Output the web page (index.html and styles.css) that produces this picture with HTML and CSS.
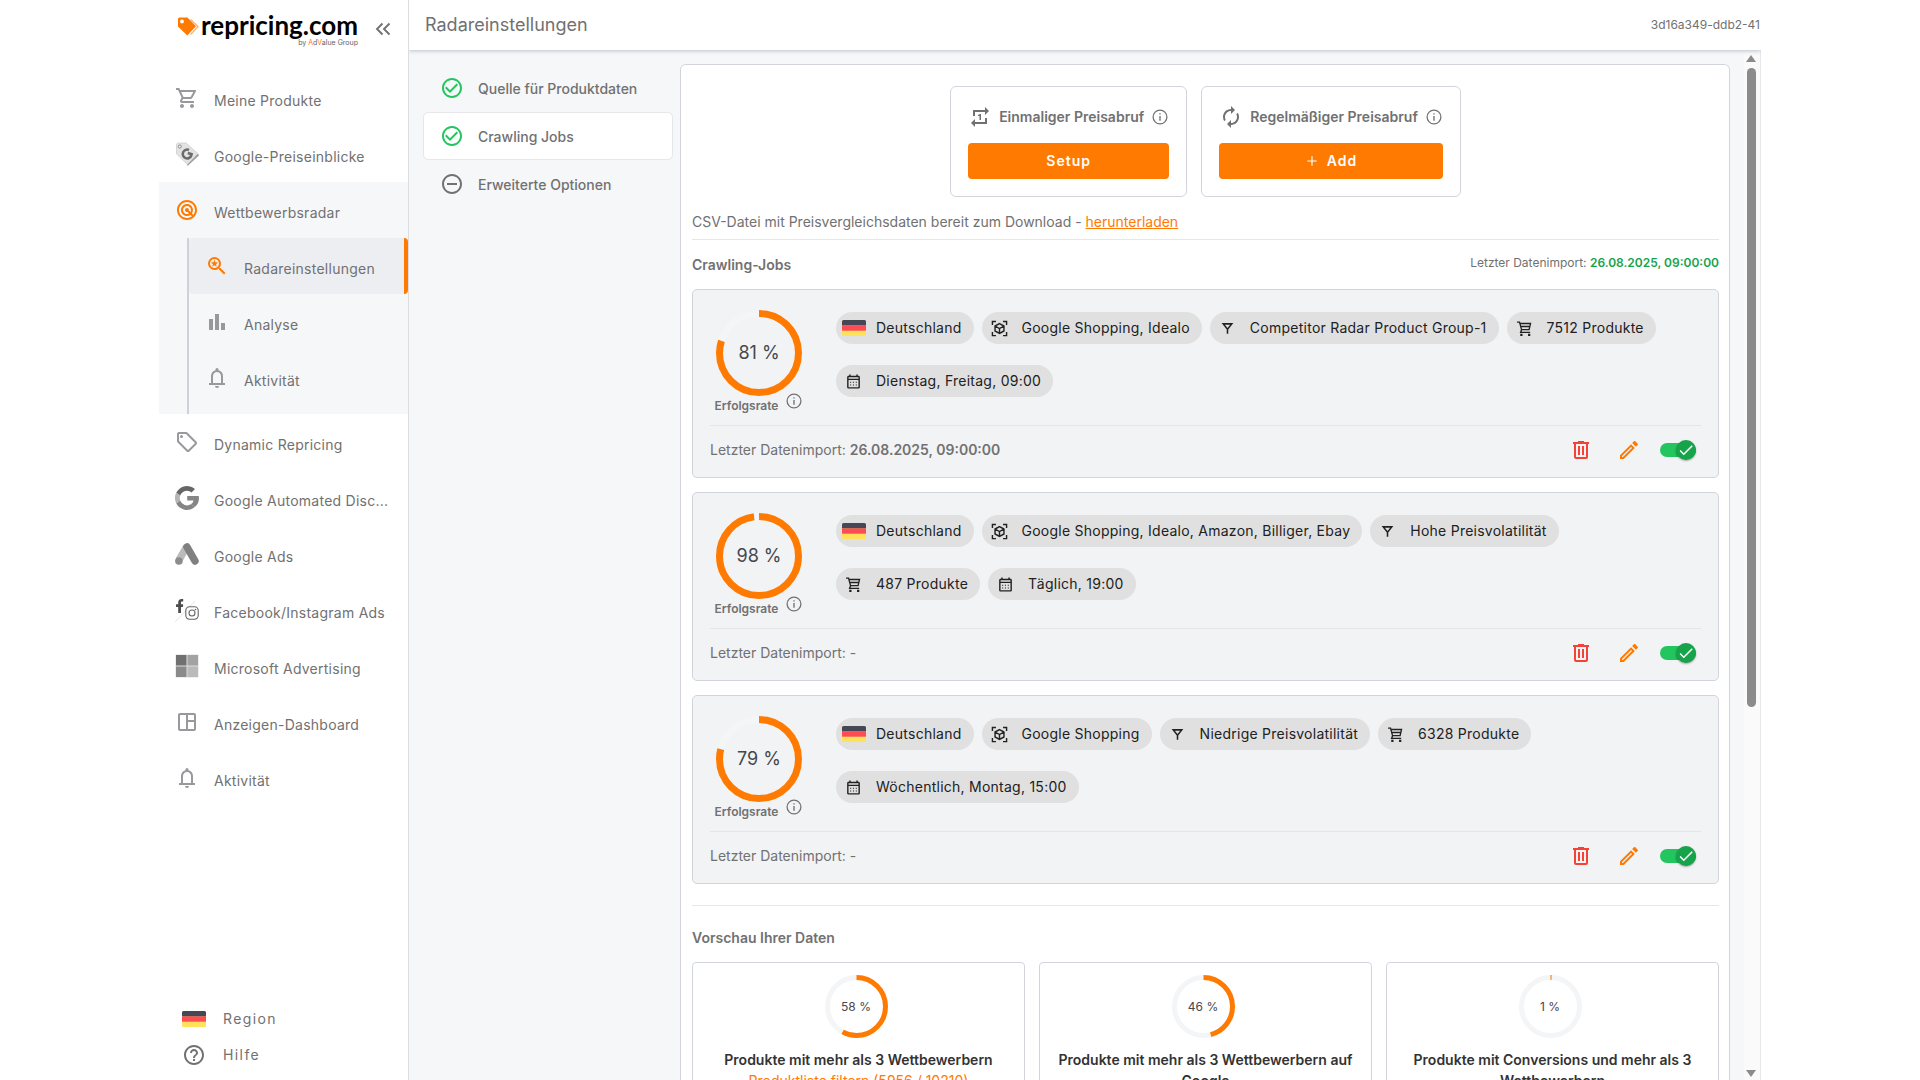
FILE: index.html
```html
<!DOCTYPE html>
<html lang="de">
<head>
<meta charset="utf-8">
<meta name="viewport" content="width=device-width, initial-scale=1">
<title>Radareinstellungen – repricing.com</title>
<link rel="stylesheet" href="styles.css">
</head>
<body>
<svg class="sprite" aria-hidden="true">
  <symbol id="cart" viewBox="0 0 24 24"><path d="M15.55 13c.75 0 1.41-.41 1.75-1.03l3.58-6.49A.996.996 0 0 0 20.01 4H5.21l-.94-2H1v2h2l3.6 7.59-1.35 2.44C4.52 15.37 5.48 17 7 17h12v-2H7l1.1-2h7.45zM6.16 6h12.15l-2.76 5H8.53L6.16 6zM7 18c-1.1 0-1.99.9-1.99 2S5.9 22 7 22s2-.9 2-2-.9-2-2-2zm10 0c-1.1 0-1.99.9-1.99 2s.89 2 1.99 2 2-.9 2-2-.9-2-2-2z"/></symbol>
  <symbol id="chip-cart" viewBox="0 0 24 24"><path fill="none" stroke="currentColor" stroke-width="1.9" d="M1.5 3H5l2.8 10.500h10.700L20.500 5H5.500M6.500 9.200h13M8 13.500 6.500 17.500H20"/><path d="M6 19.500h3.200v3.200H6zM17 19.500h3.200v3.200H17z"/></symbol>
  <symbol id="radar" viewBox="0 0 24 24"><path d="M19.740 18.330C21.150 16.600 22 14.400 22 12c0-5.520-4.480-10-10-10S2 6.480 2 12s4.480 10 10 10c2.400 0 4.600-.85 6.330-2.260.27-.22.530-.46.780-.71.030-.030.050-.060.070-.080.200-.200.390-.410.560-.620zM12 20c-4.410 0-8-3.590-8-8s3.590-8 8-8 8 3.590 8 8c0 1.850-.630 3.540-1.690 4.900l-1.430-1.430c.69-.98 1.100-2.170 1.100-3.460 0-3.310-2.690-6-6-6s-6 2.690-6 6 2.690 6 6 6c1.300 0 2.510-.420 3.490-1.130l1.420 1.420C15.540 19.370 13.850 20 12 20zm1.920-7.490c.17-.66.020-1.380-.490-1.900l-.020-.020c-.77-.77-2-.78-2.780-.040-.010.010-.030.020-.050.040-.78.780-.78 2.050 0 2.830l.020.020c.52.510 1.250.67 1.910.490l1.510 1.510c-.6.360-1.290.58-2.040.58-2.210 0-4-1.790-4-4s1.790-4 4-4 4 1.790 4 4c0 .73-.210 1.410-.560 2l-1.500-1.510z"/></symbol>
  <symbol id="saved-search" viewBox="0 0 24 24"><path d="M15.5 14h-.79l-.28-.27A6.500 6.500 0 0 0 16 9.500 6.500 6.500 0 1 0 9.500 16c1.610 0 3.090-.59 4.230-1.570l.270.280v.790l5 4.990L20.490 19l-4.990-5zm-6 0C7.010 14 5 11.990 5 9.500S7.010 5 9.500 5 14 7.010 14 9.500 11.990 14 9.500 14z"/><path d="m9.500 5.800.95 2.550 2.750.1-2.150 1.700.75 2.650-2.300-1.500-2.300 1.500.75-2.650-2.150-1.700 2.750-.1z"/></symbol>
  <symbol id="bars" viewBox="0 0 24 24"><path d="M4 9h4v11H4zm12 4h4v7h-4zm-6-9h4v16h-4z"/></symbol>
  <symbol id="bell" viewBox="0 0 24 24"><path d="M4 19v-2h2v-7q0-2.080 1.250-3.690T10.500 4.200v-.7a1.500 1.500 0 0 1 3 0v.7q2 .5 3.250 2.110T18 10v7h2v2zm8 3a2 2 0 0 1-2-2h4a2 2 0 0 1-2 2zm-4-5h8v-7q0-1.650-1.170-2.820T12 6 9.180 7.180 8 10z"/></symbol>
  <symbol id="tag" viewBox="0 0 24 24"><path d="m21.410 11.580-9-9C12.050 2.220 11.550 2 11 2H4c-1.100 0-2 .9-2 2v7c0 .55.220 1.050.59 1.420l9 9c.360.360.860.580 1.410.580s1.050-.220 1.410-.590l7-7c.370-.360.590-.860.590-1.410s-.230-1.060-.590-1.420zM13 20.010 4 11V4h7v-.010l9 9-7 7.020z"/><circle cx="6.500" cy="6.500" r="1.500"/></symbol>
  <symbol id="layout" viewBox="0 0 24 24"><path d="M19 3H5c-1.100 0-2 .9-2 2v14c0 1.100.9 2 2 2h14c1.100 0 2-.9 2-2V5c0-1.100-.9-2-2-2zM5 19V5h6v14H5zm14 0h-6v-7h6v7zm0-9h-6V5h6v5z"/></symbol>
  <symbol id="help" viewBox="0 0 24 24"><path d="M11 18h2v-2h-2v2zm1-16C6.480 2 2 6.480 2 12s4.480 10 10 10 10-4.480 10-10S17.520 2 12 2zm0 18c-4.410 0-8-3.590-8-8s3.590-8 8-8 8 3.590 8 8-3.590 8-8 8zm0-14c-2.210 0-4 1.790-4 4h2c0-1.100.9-2 2-2s2 .9 2 2c0 2-3 1.750-3 5h2c0-2.250 3-2.500 3-5 0-2.210-1.790-4-4-4z"/></symbol>
  <symbol id="check-circle" viewBox="0 0 24 24"><path d="M16.590 7.580 10 14.170l-3.590-3.580L5 12l5 5 8-8zM12 2C6.480 2 2 6.480 2 12s4.480 10 10 10 10-4.480 10-10S17.520 2 12 2zm0 18c-4.420 0-8-3.580-8-8s3.580-8 8-8 8 3.580 8 8-3.580 8-8 8z"/></symbol>
  <symbol id="minus-circle" viewBox="0 0 24 24"><path d="M7 11v2h10v-2H7zm5-9C6.480 2 2 6.480 2 12s4.480 10 10 10 10-4.480 10-10S17.520 2 12 2zm0 18c-4.410 0-8-3.590-8-8s3.590-8 8-8 8 3.590 8 8-3.590 8-8 8z"/></symbol>
  <symbol id="info" viewBox="0 0 24 24"><circle cx="12" cy="12" r="9.200" fill="none" stroke="currentColor" stroke-width="1.700"/><path d="M11.100 10.500h1.800V17h-1.800zM11.100 7h1.800v1.800h-1.800z"/></symbol>
  <symbol id="repeat-one" viewBox="0 0 24 24"><path d="M7 7h10v3l4-4-4-4v3H5v6h2V7zm10 10H7v-3l-4 4 4 4v-3h12v-6h-2v4zm-4-2V9h-1l-2 1v1h1.500v4H13z"/></symbol>
  <symbol id="autorenew" viewBox="0 0 24 24"><path d="M12 6v3l4-4-4-4v3c-4.420 0-8 3.580-8 8 0 1.570.460 3.030 1.240 4.260L6.700 14.800c-.450-.830-.7-1.790-.7-2.800 0-3.310 2.690-6 6-6zm6.760 1.740L17.300 9.200c.440.840.7 1.790.7 2.800 0 3.310-2.690 6-6 6v-3l-4 4 4 4v-3c4.420 0 8-3.580 8-8 0-1.570-.460-3.030-1.240-4.260z"/></symbol>
  <symbol id="cube" viewBox="0 0 24 24"><path fill="none" stroke="currentColor" stroke-width="2" d="M2 7V2h5M17 2h5v5M22 17v5h-5M7 22H2v-5M12 5l6.300 3.500v7L12 19l-6.300-3.500v-7zM5.700 8.500 12 12l6.300-3.500M12 12v7"/></symbol>
  <symbol id="filter" viewBox="0 0 24 24"><path fill="none" stroke="currentColor" stroke-width="2.200" d="M6 5.500h12L12 13zM12 12v7.500"/></symbol>
  <symbol id="calendar" viewBox="0 0 24 24"><path d="M19 4h-1V2h-2v2H8V2H6v2H5c-1.110 0-1.990.9-1.990 2L3 20a2 2 0 0 0 2 2h14c1.100 0 2-.9 2-2V6c0-1.100-.9-2-2-2zm0 16H5V10h14v10zm0-12H5V6h14v2zM8.700 13.700H7.200v-1.500h1.500zm4 0h-1.500v-1.500h1.500zm4 0h-1.500v-1.500h1.500zm-8 4H7.200v-1.500h1.500zm4 0h-1.500v-1.500h1.500zm4 0h-1.500v-1.500h1.500z"/></symbol>
  <symbol id="trash" viewBox="0 0 24 24"><path d="M9 3v1H4v2h1v13a2 2 0 0 0 2 2h10a2 2 0 0 0 2-2V6h1V4h-5V3H9zM7 6h10v13H7V6zm2 2v9h2V8H9zm4 0v9h2V8h-2z"/></symbol>
  <symbol id="pencil" viewBox="0 0 24 24"><path d="m14.060 9.020.920.920L5.920 19H5v-.920l9.060-9.060M17.660 3c-.25 0-.51.100-.700.290l-1.830 1.830 3.750 3.750 1.830-1.830a.996.996 0 0 0 0-1.410l-2.340-2.340c-.200-.200-.450-.290-.710-.290zm-3.600 3.190L3 17.250V21h3.750L17.810 9.940l-3.750-3.750z"/></symbol>
  <symbol id="check" viewBox="0 0 24 24"><path d="M9 16.170 4.830 12l-1.420 1.410L9 19 21 7l-1.410-1.410z"/></symbol>
  <symbol id="plus" viewBox="0 0 24 24"><path d="M11 4h2v7h7v2h-7v7h-2v-7H4v-2h7z"/></symbol>
  <symbol id="chevrons" viewBox="0 0 24 24"><path fill="none" stroke="currentColor" stroke-width="1.900" d="m11.500 6.500-5.500 5.500 5.500 5.500M18.500 6.500 13 12l5.500 5.500"/></symbol>
  <symbol id="flag-de" viewBox="0 0 24 16"><rect width="24" height="16" rx="1.500" fill="#ffe15a"/><path fill="#ff4b55" d="M0 5.300h24v5.400H0z"/><path fill="#464655" d="M1.500 0h21A1.500 1.500 0 0 1 24 1.500v3.800H0V1.500A1.500 1.500 0 0 1 1.500 0z"/></symbol>
  <symbol id="price-tag" viewBox="0 0 24 24"><path fill="#9b9b9b" d="m12.500 24 11.500-10.500-1-2L12 22z"/><path fill="#e3e3e3" stroke="#c4c4c4" stroke-width=".6" d="M2.500 1h8.700l11.600 10.600L12.300 22.400 1.500 12V2.500z"/><circle cx="4.800" cy="4.500" r="1.500" fill="#fff" stroke="#777" stroke-width=".9"/><path fill="none" stroke="#6b6b6b" stroke-width="2.500" d="M14 8a4.400 4.400 0 1 0 2.300 5.500l.3-1.300-3.800-1.200"/></symbol>
  <symbol id="google" viewBox="0 0 24 24"><path fill="#b5b5b5" d="M1.300 6.600 5.200 9.600a7.300 7.300 0 0 0 0 4.800L1.300 17.400a12 12 0 0 1 0-10.800z"/><path fill="#666" d="M1.300 6.600A12 12 0 0 1 20 3.100l-3.500 3.400A7.100 7.100 0 0 0 5.200 9.600z"/><path fill="#858585" d="M1.300 17.400 5.200 14.400a7.200 7.200 0 0 0 10.900 3.700l3.700 2.900A12 12 0 0 1 1.300 17.400z"/><path fill="#858585" d="M12.200 9.900h11.500c.9 4.300-.5 8.400-3.900 11.100l-3.700-2.900a5.400 5.400 0 0 0 2.400-3.500h-6.300z"/></symbol>
  <symbol id="google-ads" viewBox="0 0 24 24"><path stroke="#bcbcbc" stroke-width="7.500" d="M11.500 5 4 18"/><path stroke="#808080" stroke-width="7.500" stroke-linecap="round" d="m12 5 8 14"/><circle cx="3.900" cy="19" r="3.800" fill="#8c8c8c"/></symbol>
  <symbol id="social" viewBox="0 0 24 24"><path stroke="#ddd" stroke-width=".7" d="M0 24 20 3"/><path fill="#4d4d4d" d="M3.200 15V9H1V6.200h2.200V4.500C3.200 2.200 4.500 1 6.500 1h1.700v2.600H7c-.8 0-1 .4-1 1.100v1.500h2.200L7.900 9H6v6z"/><rect x="10.800" y="8.800" width="12.400" height="12.400" rx="3.600" fill="none" stroke="#666" stroke-width="1.100"/><circle cx="17" cy="15" r="3" fill="none" stroke="#666" stroke-width="1.100"/><circle cx="20.500" cy="11.500" r=".8" fill="#666"/></symbol>
  <symbol id="microsoft" viewBox="0 0 24 24"><path fill="#ddd" d="M.5.500h23v23H.5z"/><path fill="#707070" d="M1 1h10.500v10.500H1z"/><path fill="#a3a3a3" d="M12.500 1H23v10.500H12.500z"/><path fill="#8a8a8a" d="M1 12.500h10.500V23H1z"/><path fill="#bababa" d="M12.500 12.500H23V23H12.500z"/></symbol>
  <symbol id="brand-tag" viewBox="0 0 22 20"><path fill="none" stroke="#ffb36b" stroke-width="1.400" d="m12.500 2.500 7.500 7-7.500 8"/><path fill="#ff7a00" d="M1.500.5h8L18 9.200 9.300 18.500 0 9.500V2A1.500 1.500 0 0 1 1.500.5z"/><circle cx="4" cy="4.500" r="1.900" fill="#fff"/></symbol>
</svg>

<div class="app">
  <aside class="sidebar">
    <div class="brand">
      <a class="logo" href="#" aria-label="repricing.com">
        <svg class="logo-mark"><use href="#brand-tag"/></svg>
        <span class="logo-text"><span class="logo-name">repricing.com</span><span class="logo-sub">by <i>A</i>d<i>V</i>alue Group</span></span>
      </a>
      <button class="collapse" type="button" aria-label="Menü einklappen"><svg class="icon"><use href="#chevrons"/></svg></button>
    </div>
    <nav class="menu">
      <a class="item" href="#"><svg class="icon"><use href="#cart"/></svg><span>Meine Produkte</span></a>
      <a class="item" href="#"><svg class="icon"><use href="#price-tag"/></svg><span>Google-Preiseinblicke</span></a>
      <div class="group">
        <a class="item item-open" href="#"><svg class="icon"><use href="#radar"/></svg><span>Wettbewerbsradar</span></a>
        <div class="submenu">
          <a class="item item-current" href="#"><svg class="icon"><use href="#saved-search"/></svg><span>Radareinstellungen</span></a>
          <a class="item" href="#"><svg class="icon"><use href="#bars"/></svg><span>Analyse</span></a>
          <a class="item" href="#"><svg class="icon"><use href="#bell"/></svg><span>Aktivität</span></a>
        </div>
      </div>
      <a class="item" href="#"><svg class="icon"><use href="#tag"/></svg><span>Dynamic Repricing</span></a>
      <a class="item" href="#"><svg class="icon"><use href="#google"/></svg><span>Google Automated Disc...</span></a>
      <a class="item" href="#"><svg class="icon"><use href="#google-ads"/></svg><span>Google Ads</span></a>
      <a class="item" href="#"><svg class="icon"><use href="#social"/></svg><span>Facebook/Instagram Ads</span></a>
      <a class="item" href="#"><svg class="icon"><use href="#microsoft"/></svg><span>Microsoft Advertising</span></a>
      <a class="item" href="#"><svg class="icon"><use href="#layout"/></svg><span>Anzeigen-Dashboard</span></a>
      <a class="item" href="#"><svg class="icon"><use href="#bell"/></svg><span>Aktivität</span></a>
    </nav>
    <div class="sidebar-foot">
      <a class="foot-link" href="#"><svg class="flag"><use href="#flag-de"/></svg>Region</a>
      <a class="foot-link" href="#"><svg class="icon"><use href="#help"/></svg>Hilfe</a>
    </div>
  </aside>

  <div class="workspace">
    <header class="topbar">
      <h1>Radareinstellungen</h1>
      <span class="account">3d16a349-ddb2-41</span>
    </header>
    <div class="body">
      <nav class="steps">
        <a class="step" href="#"><svg class="icon done"><use href="#check-circle"/></svg><span>Quelle für Produktdaten</span></a>
        <a class="step step-current" href="#"><svg class="icon done"><use href="#check-circle"/></svg><span>Crawling Jobs</span></a>
        <a class="step" href="#"><svg class="icon"><use href="#minus-circle"/></svg><span>Erweiterte Optionen</span></a>
      </nav>

      <main class="panel">
        <div class="actions">
          <section class="action">
            <h2><svg class="icon"><use href="#repeat-one"/></svg>Einmaliger Preisabruf<svg class="icon-info"><use href="#info"/></svg></h2>
            <button class="primary" type="button">Setup</button>
          </section>
          <section class="action">
            <h2><svg class="icon"><use href="#autorenew"/></svg>Regelmäßiger Preisabruf<svg class="icon-info"><use href="#info"/></svg></h2>
            <button class="primary" type="button"><svg class="icon-plus"><use href="#plus"/></svg>Add</button>
          </section>
        </div>
        <p class="download">CSV-Datei mit Preisvergleichsdaten bereit zum Download - <a href="#">herunterladen</a></p>

        <div class="section-head">
          <h2>Crawling-Jobs</h2>
          <p>Letzter Datenimport: <strong>26.08.2025, 09:00:00</strong></p>
        </div>

        <div class="jobs">
          <article class="job">
            <div class="job-main">
              <div class="rate">
                <div class="ring ring-large"><svg viewBox="0 0 86 86"><circle class="track" cx="43" cy="43" r="39.5"/><circle class="value" cx="43" cy="43" r="39.5" pathLength="100" stroke-dasharray="80 100"/></svg><span>81 %</span></div>
                <div class="rate-label"><span>Erfolgsrate</span><svg class="icon-info"><use href="#info"/></svg></div>
              </div>
              <ul class="chips">
                <li><svg class="flag"><use href="#flag-de"/></svg>Deutschland</li>
                <li><svg class="icon-chip"><use href="#cube"/></svg>Google Shopping, Idealo</li>
                <li><svg class="icon-chip"><use href="#filter"/></svg>Competitor Radar Product Group-1</li>
                <li><svg class="icon-chip"><use href="#chip-cart"/></svg>7512 Produkte</li>
                <li><svg class="icon-chip"><use href="#calendar"/></svg>Dienstag, Freitag, 09:00</li>
              </ul>
            </div>
            <div class="job-foot">
              <p>Letzter Datenimport: <strong>26.08.2025, 09:00:00</strong></p>
              <div class="tools">
                <button class="tool delete" type="button" aria-label="Löschen"><svg class="icon"><use href="#trash"/></svg></button>
                <button class="tool edit" type="button" aria-label="Bearbeiten"><svg class="icon"><use href="#pencil"/></svg></button>
              </div>
              <label class="switch"><input type="checkbox" checked aria-label="Aktiv"><span class="knob"><svg><use href="#check"/></svg></span></label>
            </div>
          </article>

          <article class="job">
            <div class="job-main">
              <div class="rate">
                <div class="ring ring-large"><svg viewBox="0 0 86 86"><circle class="track" cx="43" cy="43" r="39.5"/><circle class="value" cx="43" cy="43" r="39.5" pathLength="100" stroke-dasharray="98 100"/></svg><span>98 %</span></div>
                <div class="rate-label"><span>Erfolgsrate</span><svg class="icon-info"><use href="#info"/></svg></div>
              </div>
              <ul class="chips">
                <li><svg class="flag"><use href="#flag-de"/></svg>Deutschland</li>
                <li><svg class="icon-chip"><use href="#cube"/></svg>Google Shopping, Idealo, Amazon, Billiger, Ebay</li>
                <li><svg class="icon-chip"><use href="#filter"/></svg>Hohe Preisvolatilität</li>
                <li><svg class="icon-chip"><use href="#chip-cart"/></svg>487 Produkte</li>
                <li><svg class="icon-chip"><use href="#calendar"/></svg>Täglich, 19:00</li>
              </ul>
            </div>
            <div class="job-foot">
              <p>Letzter Datenimport: -</p>
              <div class="tools">
                <button class="tool delete" type="button" aria-label="Löschen"><svg class="icon"><use href="#trash"/></svg></button>
                <button class="tool edit" type="button" aria-label="Bearbeiten"><svg class="icon"><use href="#pencil"/></svg></button>
              </div>
              <label class="switch"><input type="checkbox" checked aria-label="Aktiv"><span class="knob"><svg><use href="#check"/></svg></span></label>
            </div>
          </article>

          <article class="job">
            <div class="job-main">
              <div class="rate">
                <div class="ring ring-large"><svg viewBox="0 0 86 86"><circle class="track" cx="43" cy="43" r="39.5"/><circle class="value" cx="43" cy="43" r="39.5" pathLength="100" stroke-dasharray="79 100"/></svg><span>79 %</span></div>
                <div class="rate-label"><span>Erfolgsrate</span><svg class="icon-info"><use href="#info"/></svg></div>
              </div>
              <ul class="chips">
                <li><svg class="flag"><use href="#flag-de"/></svg>Deutschland</li>
                <li><svg class="icon-chip"><use href="#cube"/></svg>Google Shopping</li>
                <li><svg class="icon-chip"><use href="#filter"/></svg>Niedrige Preisvolatilität</li>
                <li><svg class="icon-chip"><use href="#chip-cart"/></svg>6328 Produkte</li>
                <li><svg class="icon-chip"><use href="#calendar"/></svg>Wöchentlich, Montag, 15:00</li>
              </ul>
            </div>
            <div class="job-foot">
              <p>Letzter Datenimport: -</p>
              <div class="tools">
                <button class="tool delete" type="button" aria-label="Löschen"><svg class="icon"><use href="#trash"/></svg></button>
                <button class="tool edit" type="button" aria-label="Bearbeiten"><svg class="icon"><use href="#pencil"/></svg></button>
              </div>
              <label class="switch"><input type="checkbox" checked aria-label="Aktiv"><span class="knob"><svg><use href="#check"/></svg></span></label>
            </div>
          </article>
        </div>

        <section class="preview">
          <h2>Vorschau Ihrer Daten</h2>
          <div class="stats">
            <article class="stat">
              <div class="ring ring-small"><svg viewBox="0 0 63 63"><circle class="track" cx="31.5" cy="31.5" r="29"/><circle class="value" cx="31.5" cy="31.5" r="29" pathLength="100" stroke-dasharray="58 100"/></svg><span>58 %</span></div>
              <h3>Produkte mit mehr als 3 Wettbewerbern</h3>
              <a href="#">Produktliste filtern (5956 / 10210)</a>
            </article>
            <article class="stat">
              <div class="ring ring-small"><svg viewBox="0 0 63 63"><circle class="track" cx="31.5" cy="31.5" r="29"/><circle class="value" cx="31.5" cy="31.5" r="29" pathLength="100" stroke-dasharray="46 100"/></svg><span>46 %</span></div>
              <h3>Produkte mit mehr als 3 Wettbewerbern auf Google</h3>
            </article>
            <article class="stat">
              <div class="ring ring-small"><svg viewBox="0 0 63 63"><circle class="track" cx="31.5" cy="31.5" r="29"/><circle class="value" cx="31.5" cy="31.5" r="29" pathLength="100" stroke-dasharray="0.6 100"/></svg><span>1 %</span></div>
              <h3>Produkte mit Conversions und mehr als 3 Wettbewerbern</h3>
            </article>
          </div>
        </section>
      </main>

      <div class="scrollbar" aria-hidden="true"><i class="arrow-up"></i><i class="thumb"></i><i class="arrow-down"></i></div>
    </div>
  </div>
</div>
</body>
</html>
```
FILE: styles.css
```css
* { box-sizing: border-box; }

body {
  margin: 0;
  background: #fff;
  color: #717171;
  font: 400 14px/20px Inter, "Liberation Sans", sans-serif;
}

h1, h2, h3, p, ul { margin: 0; padding: 0; font-size: 14px; font-weight: 600; }
p { font-weight: 400; }
strong { font-weight: 600; }
a { color: inherit; text-decoration: none; }
button { padding: 0; border: 0; background: none; color: inherit; font: inherit; cursor: pointer; }
svg { flex: none; fill: currentColor; }

.sprite { position: absolute; width: 0; height: 0; }
.icon { width: 24px; height: 24px; }
.icon-info { width: 18px; height: 18px; }
.icon-chip { width: 17px; height: 17px; }
.icon-plus { width: 14px; height: 14px; }
.flag { width: 24px; height: 16px; }

.app {
  display: flex;
  max-width: 1602px;
  height: 100vh;
  margin: 0 auto;
}

/* Sidebar */
.sidebar {
  display: flex;
  flex: none;
  flex-direction: column;
  width: 250px;
  border-right: 1px solid #dcdde0;
}
.brand {
  display: flex;
  align-items: flex-start;
  justify-content: space-between;
  height: 70px;
  padding: 11px 13px 0 19px;
}
.logo { display: flex; }
.logo-mark { width: 22px; height: 20px; margin-top: 6px; }
.logo-text { display: flex; flex-direction: column; align-items: flex-end; margin-left: 1px; }
.logo-name { color: #000; font: 700 26px/28px Lato, sans-serif; }
.logo-sub { color: #5d6470; font: 400 7px/8px Inter, sans-serif; }
.logo-sub i { color: #ff7a00; font-style: normal; }
.collapse { height: 24px; margin-top: 6px; }

.menu { flex: 1; }
.item {
  display: flex;
  align-items: center;
  gap: 15px;
  height: 56px;
  padding-left: 16px;
  letter-spacing: .25px;
}
.item .icon { color: #98989d; }
.item span { padding-top: 6px; white-space: nowrap; }
.group { background: #f6f7f9; }
.item-open .icon, .item-current .icon { color: #ff7a00; }
.submenu { margin-left: 28px; padding-bottom: 8px; border-left: 2px solid #cfd1da; }
.item-current {
  border-right: 4px solid #ff7a00;
  border-radius: 4px;
  background: #edeef2;
}
.sidebar-foot { display: flex; flex-direction: column; gap: 12px; padding: 0 0 13px 23px; }
.foot-link { display: flex; align-items: center; gap: 17px; height: 24px; letter-spacing: .1em; }

/* Top bar */
.workspace { display: flex; flex: 1; flex-direction: column; min-width: 0; }
.topbar {
  z-index: 1;
  display: flex;
  align-items: center;
  justify-content: space-between;
  height: 50px;
  padding: 0 1px 0 16px;
  background: #fff;
  box-shadow: 0 1px 4px #b9bfce;
  clip-path: inset(0 0 -8px 0);
}
.topbar h1 { font-size: 18px; font-weight: 400; }
.account { font-size: 12px; }

.body { display: flex; flex: 1; min-height: 0; background: #f6f7f9; }

/* Setup steps */
.steps { flex: none; width: 250px; margin: 14px 7px 0 14px; }
.step {
  display: flex;
  align-items: center;
  gap: 14px;
  height: 48px;
  padding-left: 16px;
  border: 1px solid transparent;
  border-radius: 5px;
  font-weight: 500;
}
.step span { padding-top: 2px; }
.step-current { border-color: #e5e7eb; background: #fff; }
.step .done { color: #22c55e; }

/* Main panel */
.panel {
  flex: 1;
  min-width: 0;
  margin: 14px 14px 0 0;
  padding: 21px 10px 21px 11px;
  overflow-y: auto;
  scrollbar-width: none;
  border: 1px solid #d1d5db;
  border-bottom: 0;
  border-radius: 6px 6px 0 0;
  background: #fff;
}
.actions { display: flex; justify-content: center; gap: 14px; }
.action {
  display: flex;
  flex-direction: column;
  gap: 14px;
  padding: 18px 17px 17px;
  border: 1px solid #d1d5db;
  border-radius: 6px;
}
.action h2 { display: flex; align-items: center; gap: 7px; }
.primary {
  display: flex;
  align-items: center;
  justify-content: center;
  gap: 8px;
  height: 36px;
  border-radius: 4px;
  background: #ff7a00;
  color: #fff;
  font-weight: 600;
  letter-spacing: 1px;
}
.download { margin-top: 15px; padding-bottom: 7px; border-bottom: 1px solid #e5e7eb; }
.download a { color: #ff7a00; text-decoration: underline; }

.section-head { display: flex; justify-content: space-between; margin: 15px 0 14px; }
.section-head p { font-size: 12px; line-height: 16px; }
.section-head strong { color: #16a34a; }

/* Crawling jobs */
.jobs { display: flex; flex-direction: column; gap: 14px; }
.job {
  padding: 20px 17px 0;
  border: 1px solid #d1d5db;
  border-radius: 5px;
  background: #f2f3f5;
}
.job-main { display: flex; gap: 28px; padding-bottom: 11px; border-bottom: 1px solid #e3e5e8; }
.rate { display: flex; flex: none; flex-direction: column; align-items: center; width: 98px; }
.rate-label { display: flex; align-items: flex-end; gap: 7px; height: 22px; margin-top: -4px; font-size: 12px; font-weight: 600; line-height: 16px; }
.rate-label .icon-info { align-self: flex-start; }

.ring { display: grid; place-items: center; color: #45484d; }
.ring svg, .ring span { grid-area: 1 / 1; }
.ring svg { width: 100%; height: 100%; transform: rotate(-90deg); }
.ring circle { fill: none; }
.ring .track { stroke: #f4f5f7; }
.ring .value { stroke: #ff7a00; }
.ring-large { width: 86px; height: 86px; font-size: 18px; }
.ring-large circle { stroke-width: 7px; }
.ring-small { width: 63px; height: 63px; margin-right: 5px; font-size: 12px; }
.ring-small circle { stroke-width: 5px; }

.chips {
  display: flex;
  flex: 1;
  flex-wrap: wrap;
  align-content: flex-start;
  gap: 21px 8px;
  padding-top: 2px;
  list-style: none;
}
.chips li {
  display: flex;
  align-items: center;
  height: 32px;
  padding-right: 12px;
  border-radius: 16px;
  background: #e0e0e0;
  color: #212121;
  font-weight: 400;
  letter-spacing: .25px;
}
.chips .flag { margin: 0 10px 0 6px; }
.chips .icon-chip { margin: 0 14px 0 9px; }

.job-foot { display: flex; align-items: center; height: 51px; padding-bottom: 3px; }
.job-foot p { flex: 1; }
.tools { display: flex; gap: 24px; margin-right: 19px; }
.tool { height: 24px; }
.delete { color: #f44336; }
.edit { color: #ff7a00; }
.switch { position: relative; width: 36px; height: 20px; margin-right: 5px; }
.switch input {
  width: 36px;
  height: 14px;
  margin: 3px 0;
  border-radius: 7px;
  appearance: none;
  background: #22c55e;
}
.knob {
  position: absolute;
  top: 0;
  right: 0;
  display: grid;
  place-items: center;
  width: 20px;
  height: 20px;
  border-radius: 50%;
  background: #16a34a;
  box-shadow: 0 1px 2px #0005;
  color: #fff;
}
.knob svg { width: 18px; height: 18px; }

/* Data preview */
.preview { margin-top: 21px; padding-top: 22px; border-top: 1px solid #e5e7eb; }
.stats { display: grid; grid-template-columns: repeat(3, 1fr); gap: 14px; margin-top: 14px; }
.stat {
  display: flex;
  flex-direction: column;
  align-items: center;
  padding: 12px 14px;
  border: 1px solid #d1d5db;
  border-radius: 4px;
  line-height: 21px;
  text-align: center;
}
.stat h3 { margin-top: 11px; color: #333; line-height: 21px; }
.stat a { color: #ff7a00; }

/* Scrollbar of the content area */
.scrollbar {
  display: flex;
  flex: none;
  flex-direction: column;
  align-items: center;
  width: 17px;
  padding: 5px 2px 3px 0;
  border-right: 1px solid #e6e7ea;
  background: #fafafa;
}
.arrow-up, .arrow-down { border: 5px solid transparent; }
.arrow-up { border-top: 0; border-bottom: 7px solid #8b8b8b; }
.arrow-down { margin-top: auto; border-bottom: 0; border-top: 7px solid #8b8b8b; }
.thumb { width: 9px; height: 62.5%; margin-top: 6px; border-radius: 5px; background: #8b8b8b; }
```
